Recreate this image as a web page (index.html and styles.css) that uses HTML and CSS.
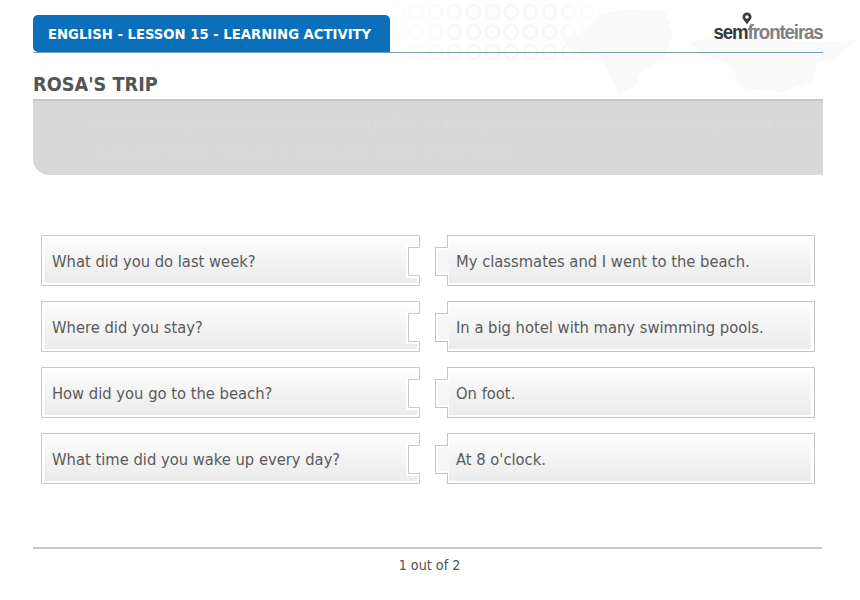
FILE: index.html
```html
<!DOCTYPE html>
<html lang="en">
<head>
<meta charset="utf-8">
<title>Rosa's Trip</title>
<link rel="stylesheet" href="styles.css">
</head>
<body>
<svg class="defs" width="0" height="0" aria-hidden="true">
  <defs>
    <linearGradient id="fill" x1="0" y1="0" x2="0" y2="1">
      <stop offset="0" stop-color="#fcfcfc"/>
      <stop offset="1" stop-color="#ebebeb"/>
    </linearGradient>
    <linearGradient id="fade" x1="0" y1="0" x2="1" y2="0">
      <stop offset="0" stop-color="#fff" stop-opacity=".9"/>
      <stop offset=".45" stop-color="#fff" stop-opacity="0"/>
      <stop offset=".75" stop-color="#fff" stop-opacity="0"/>
      <stop offset="1" stop-color="#fff" stop-opacity=".9"/>
    </linearGradient>
    <pattern id="dots" x="8" y="2" width="19" height="20" patternUnits="userSpaceOnUse">
      <circle cx="9.500" cy="10" r="6.500" fill="none" stroke="#f7f7f7" stroke-width="3"/>
    </pattern>
    <symbol id="qshape" viewBox="0 0 380 52">
      <path class="fillq" d="M3.500 3.500H376V10.500H365V43H376V48H3.500z"/>
      <path class="lineq" d="M.5.500H378.500V12.500H367.500V40.500H378.500V50.500H.5z"/>
    </symbol>
    <symbol id="ashape" viewBox="0 0 380 52">
      <path class="fillt" d="M3 15H14V38H3z"/>
      <path class="filla" d="M14 3.500H376V48H14z"/>
      <path class="linea" d="M12.500.5H379.500V50.500H12.500V40.500H.5V12.500H12.500z"/>
    </symbol>
  </defs>
</svg>
<svg class="world" width="860" height="100" viewBox="0 0 860 100" aria-hidden="true">
  <rect class="dotband" x="390" y="4" width="210" height="56"/>
  <rect class="dotfade" x="390" y="4" width="210" height="56"/>
  <path class="land" d="M600 14l30-5 34 2 9 22-8 24-24 14-6 16-16 6-8-14-10-22-30-8-8-10 22-8z"/>
  <path class="land" d="M690 42l40-8 50 6 40 2 37-2-22 18-18 6-6 18-30 10-40-4-10-24-30-10z"/>
</svg>
<div class="page">
  <header class="top">
    <div class="tab">ENGLISH - LESSON 15 - LEARNING ACTIVITY</div>
    <div class="logo">
      <svg class="pin" width="10" height="13" viewBox="0 0 10 13"><path d="M5 .5a4.500 4.500 0 0 1 4.500 4.500c0 2.500-2.700 4-4.500 7.500C3.200 9 .5 7.500.5 5A4.500 4.500 0 0 1 5 .5z" fill="#3c3c3c"/><circle cx="5" cy="5" r="1.800" fill="#fff"/></svg>
      <span class="logo-text"><b>sem</b>fronteiras</span>
    </div>
  </header>
  <h1 class="title">ROSA'S TRIP</h1>
  <div class="band">
    <p>You can do a quick review with this activity. Click on each question and then on the matching answer to see</p>
    <p class="second">if you got it right. Then go on to the next screen of the lesson.</p>
  </div>
  <main class="rows">
    <div class="row">
      <div class="card q"><svg class="shape" width="380" height="52"><use href="#qshape"/></svg><span>What did you do last week?</span></div>
      <div class="card a"><svg class="shape" width="380" height="52"><use href="#ashape"/></svg><span>My classmates and I went to the beach.</span></div>
    </div>
    <div class="row">
      <div class="card q"><svg class="shape" width="380" height="52"><use href="#qshape"/></svg><span>Where did you stay?</span></div>
      <div class="card a"><svg class="shape" width="380" height="52"><use href="#ashape"/></svg><span>In a big hotel with many swimming pools.</span></div>
    </div>
    <div class="row">
      <div class="card q"><svg class="shape" width="380" height="52"><use href="#qshape"/></svg><span>How did you go to the beach?</span></div>
      <div class="card a"><svg class="shape" width="380" height="52"><use href="#ashape"/></svg><span>On foot.</span></div>
    </div>
    <div class="row">
      <div class="card q"><svg class="shape" width="380" height="52"><use href="#qshape"/></svg><span>What time did you wake up every day?</span></div>
      <div class="card a"><svg class="shape" width="380" height="52"><use href="#ashape"/></svg><span>At 8 o'clock.</span></div>
    </div>
  </main>
  <footer class="foot">1 out of 2</footer>
</div>
</body>
</html>
```
FILE: styles.css
```css
* { box-sizing: border-box; }
html, body { margin: 0; background: #fff; }
body { position: relative; font-family: "DejaVu Sans", sans-serif; font-stretch: condensed; color: #555; width: 860px; height: 600px; overflow: hidden; }
.defs { display: block; height: 0; }
.world { position: absolute; left: 0; top: 0; }
.dotband { fill: url(#dots); }
.dotfade { fill: url(#fade); }
.land { fill: #f9f9f9; }
.page { position: relative; padding: 16px 37px 0 33px; }
.top { display: flex; justify-content: space-between; align-items: flex-end; height: 37px; border-bottom: 1px solid #7b9cbb; }
.tab { width: 357px; height: 37px; background: #0b6fba; color: #fff; border-radius: 5px 5px 0 5px; padding-left: 15px; font-size: 14.700px; font-weight: bold; line-height: 37px; white-space: nowrap; }
.logo { position: relative; height: 37px; display: flex; align-items: flex-end; padding-bottom: 10px; }
.pin { position: absolute; right: 71px; top: -3px; }
.logo-text { font: bold 21px/20px "Liberation Sans", sans-serif; font-stretch: normal; letter-spacing: -1.250px; color: #808080; transform: scaleX(.89); transform-origin: right center; }
.logo-text b { color: #3a3a3a; }
.title { margin: 0; height: 46px; padding-top: 19px; font-size: 19.700px; font-weight: bold; line-height: 26px; color: #555; }
.band { height: 76px; background: #d8d8d8; border-top: 2px solid #c6c6c6; border-radius: 0 0 0 16px; padding: 9px 0 0 57px; color: #dbdbdb; font-size: 15px; line-height: 28px; white-space: nowrap; overflow: hidden; }
.band p { margin: 0; }
.band .second { padding-left: 5px; }
.rows { display: flex; flex-direction: column; gap: 14px; margin-top: 60px; padding-left: 8px; }
.row { display: flex; gap: 14px; height: 52px; }
.card { position: relative; width: 380px; height: 52px; padding-top: 2px; display: flex; align-items: center; font-size: 16.400px; line-height: 50px; color: #5a5a5a; }
.card span { position: relative; }
.card.q { padding-left: 11px; }
.card.a { padding-left: 21px; }
.shape { position: absolute; left: 0; top: 0; }
.lineq { fill: none; stroke: #c9c9c9; }
.fillq, .filla { fill: url(#fill); }
.fillt { fill: #f6f6f6; }
.linea { fill: none; stroke: #888; stroke-dasharray: 1 1; }
.foot { margin-top: 62px; padding: 6px 0 0 4px; border-top: 2px solid #c6c6c6; text-align: center; font-size: 14.200px; line-height: 20px; color: #555; width: 789px; }
```
